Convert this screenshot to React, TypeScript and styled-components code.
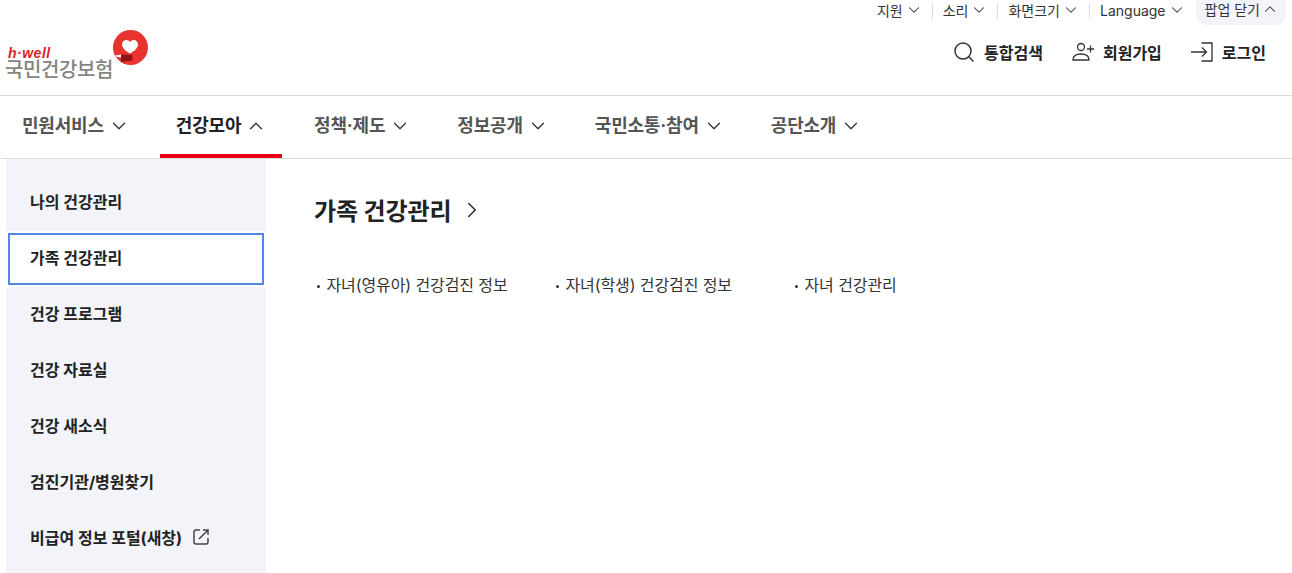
import React from 'react'
import styled, { createGlobalStyle } from 'styled-components'
import { ChevronDown, ChevronUp, ChevronRight } from 'lucide-react'

const GlobalStyle = createGlobalStyle`
  html, body {
    margin: 0;
    padding: 0;
    background: #fff;
    font-family: Inter, 'Noto Sans CJK KR', sans-serif;
    color: #222;
  }
  * {
    box-sizing: border-box;
  }
`

const Page = styled.div`
  width: 1292px;
  height: 573px;
  overflow: hidden;
`

const Header = styled.header`
  height: 95px;
  display: flex;
  justify-content: space-between;
  padding: 0 6px;
`

const Logo = styled.div`
  position: relative;
  width: 150px;
  height: 95px;
`

const LogoWell = styled.span`
  position: absolute;
  left: 2px;
  top: 47px;
  font: italic 700 14px/12px 'Liberation Sans', sans-serif;
  letter-spacing: 0.5px;
  color: #d9232d;
`

const LogoName = styled.span`
  position: absolute;
  left: -1px;
  top: 60px;
  font-size: 20px;
  line-height: 20px;
  font-weight: 500;
  letter-spacing: -0.4px;
  color: #85857f;
`

const LogoMark = styled.svg`
  position: absolute;
  left: 107px;
  top: 30px;
`

const HeaderRight = styled.div`
  display: flex;
  flex-direction: column;
  align-items: flex-end;
`

const UtilBar = styled.ul`
  display: flex;
  align-items: flex-start;
  list-style: none;
  margin: 0;
  padding: 0;
  height: 25px;
`

const UtilItem = styled.li<{ $divider?: boolean }>`
  display: flex;
  align-items: center;
  gap: 2px;
  height: 16px;
  margin-top: 3px;
  padding: 0 9px 2px 10px;
  font-size: 14px;
  color: #333;
  border-left: ${(p) => (p.$divider ? '1px solid #ddd' : '0')};
`

const PopupClose = styled.li`
  display: flex;
  align-items: center;
  gap: 1px;
  height: 25px;
  padding: 0 7px 8px 9px;
  margin-left: 1px;
  font-size: 14px;
  color: #333;
  background: #f2f4fa;
  border-radius: 0 0 9px 9px;
`

const UserBar = styled.div`
  display: flex;
  align-items: center;
  gap: 29px;
  height: 53px;
  padding-right: 20px;
`

const UserLink = styled.a`
  display: flex;
  align-items: center;
  gap: 9px;
  font-size: 16px;
  font-weight: 700;
  color: #222;
`

const MainNav = styled.nav`
  display: flex;
  gap: 16px;
  height: 64px;
  padding-left: 6px;
  border-top: 1px solid #ddd;
  border-bottom: 1px solid #ddd;
`

const NavItem = styled.a<{ $active?: boolean }>`
  display: flex;
  align-items: center;
  gap: 4px;
  height: 62px;
  padding: 0 ${(p) => (p.$active ? '14.8px' : '14px')} 6px 16px;
  font-size: 18px;
  font-weight: 700;
  letter-spacing: -0.2px;
  color: ${(p) => (p.$active ? '#222' : '#555')};
  box-shadow: ${(p) => (p.$active ? 'inset 0 -4px 0 #e60012' : 'none')};
`

const NavChevron = styled.span`
  display: flex;
  margin-top: 4px;
  color: #333;
`

const Body = styled.div`
  display: flex;
  padding-left: 6px;
`

const SideMenu = styled.ul`
  width: 260px;
  height: 414px;
  list-style: none;
  margin: 0;
  padding: 16px 0 0;
  background: #f2f4fa;
`

const SideItem = styled.li<{ $active?: boolean }>`
  height: 56px;
  padding: 2px;
  background: ${(p) => (p.$active ? '#fff' : 'transparent')};
`

const SideLink = styled.a<{ $active?: boolean }>`
  display: flex;
  align-items: center;
  gap: 11px;
  height: 52px;
  padding: 0 0 5px 20px;
  font-size: 16px;
  font-weight: 700;
  color: #222;
  border: 2px solid ${(p) => (p.$active ? '#4f86e8' : 'transparent')};
`

const Content = styled.main`
  padding: 31px 0 0 48px;
`

const Title = styled.h2`
  display: flex;
  align-items: center;
  gap: 8px;
  margin: 0 0 45px;
  height: 38px;
  font-size: 24px;
  font-weight: 700;
  letter-spacing: -0.1px;
  color: #222;
`

const TitleChevron = styled.span`
  display: flex;
  margin-top: 2px;
  color: #333;
`

const LinkList = styled.ul`
  display: flex;
  list-style: none;
  margin: 0;
  padding: 0;
`

const LinkItem = styled.li`
  position: relative;
  width: 239px;
  padding-left: 12.5px;
  font-size: 16px;
  line-height: 24px;
  letter-spacing: -0.1px;
  color: #333;

  &::before {
    content: '';
    position: absolute;
    left: 3px;
    top: 12px;
    width: 3px;
    height: 3px;
    border-radius: 50%;
    background: #333;
  }
`

const utilItems = ['지원', '소리', '화면크기', 'Language']
const navItems = [
  { label: '민원서비스' },
  { label: '건강모아', active: true },
  { label: '정책·제도' },
  { label: '정보공개' },
  { label: '국민소통·참여' },
  { label: '공단소개' },
]
const sideItems = ['나의 건강관리', '가족 건강관리', '건강 프로그램', '건강 자료실', '건강 새소식', '검진기관/병원찾기']
const links = ['자녀(영유아) 건강검진 정보', '자녀(학생) 건강검진 정보', '자녀 건강관리']

const App = () => {
  return (
    <Page>
      <GlobalStyle />
      <Header>
        <Logo>
          <LogoWell>h·well</LogoWell>
          <LogoName>국민건강보험</LogoName>
          <LogoMark width="36" height="38" viewBox="0 0 36 38">
            <circle cx="17.5" cy="17.5" r="17.500" fill="#e8332f" />
            <path d="M17 23.500c-4.500-2.500-8-5.500-8-9 0-2.600 2-4.500 4.300-4.500 1.600 0 3 .9 3.700 2.300.7-1.400 2.100-2.300 3.700-2.300 2.300 0 4.300 1.900 4.300 4.500 0 3.500-3.500 6.500-8 9z" fill="#fff" />
            <path d="M0 26l8-1.500v3z" fill="#fff" />
            <path d="M8 24.500l11.500.5v5.500l-11.500 1.500z" fill="#8f1418" />
          </LogoMark>
        </Logo>
        <HeaderRight>
          <UtilBar>
            {utilItems.map((item, i) => (
              <UtilItem key={item} $divider={i > 0}>
                {item}
                <ChevronDown size={18} strokeWidth={1.4} />
              </UtilItem>
            ))}
            <PopupClose>
              팝업 닫기
              <ChevronUp size={18} strokeWidth={1.4} />
            </PopupClose>
          </UtilBar>
          <UserBar>
            <UserLink>
              <svg width="21" height="20" viewBox="0 0 21 20" fill="none" stroke="#333" strokeWidth="1.5">
                <circle cx="9" cy="9" r="8" />
                <path d="M14.800 14.800l4.700 4.700" />
              </svg>
              통합검색
            </UserLink>
            <UserLink>
              <svg width="22" height="20" viewBox="0 0 22 20" fill="none" stroke="#333" strokeWidth="1.3">
                <circle cx="9" cy="5" r="3.500" />
                <path d="M1 18c0-4 3.500-6 8-6s8 2 8 6z" />
                <path d="M15 7h7M18.500 3.500v7" />
              </svg>
              회원가입
            </UserLink>
            <UserLink>
              <svg width="22" height="20" viewBox="0 0 22 20" fill="none" stroke="#333" strokeWidth="1.3">
                <path d="M10.500 1h10.500v18h-10.500" />
                <path d="M0 10h15.500M11 5.500l4.500 4.500-4.500 4.500" />
              </svg>
              로그인
            </UserLink>
          </UserBar>
        </HeaderRight>
      </Header>
      <MainNav>
        {navItems.map((item) => (
          <NavItem key={item.label} $active={item.active}>
            {item.label}
            <NavChevron>
              {item.active ? <ChevronUp size={22} strokeWidth={1.4} /> : <ChevronDown size={22} strokeWidth={1.4} />}
            </NavChevron>
          </NavItem>
        ))}
      </MainNav>
      <Body>
        <SideMenu>
          {sideItems.map((item, i) => (
            <SideItem key={item} $active={i === 1}>
              <SideLink $active={i === 1}>{item}</SideLink>
            </SideItem>
          ))}
          <SideItem>
            <SideLink>
              비급여 정보 포털(새창)
              <svg width="16" height="16" viewBox="0 0 16 16" fill="none" stroke="#444" strokeWidth="1.5">
                <path d="M7 1h-4a2 2 0 0 0-2 2v10a2 2 0 0 0 2 2h10a2 2 0 0 0 2-2v-4" />
                <path d="M6 10l8.500-8.500M10 1h5v5" />
              </svg>
            </SideLink>
          </SideItem>
        </SideMenu>
        <Content>
          <Title>
            가족 건강관리
            <TitleChevron>
              <ChevronRight size={26} strokeWidth={1.5} />
            </TitleChevron>
          </Title>
          <LinkList>
            {links.map((link) => (
              <LinkItem key={link}>{link}</LinkItem>
            ))}
          </LinkList>
        </Content>
      </Body>
    </Page>
  )
}

export default App
